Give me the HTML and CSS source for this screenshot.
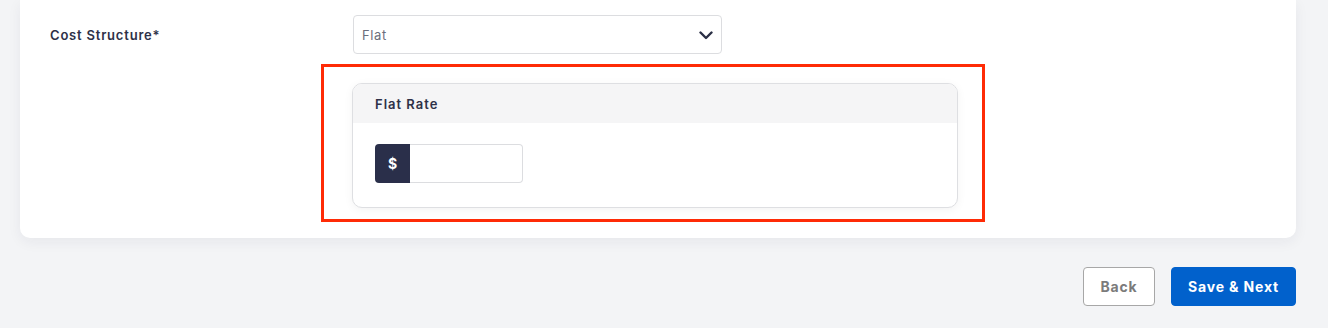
FILE: index.html
```html
<!DOCTYPE html>
<html lang="en">
<head>
<meta charset="utf-8">
<title>Cost Structure</title>
<link rel="stylesheet" href="styles.css">
</head>
<body>
<div class="page">
  <div class="card">
    <div class="row">
      <div class="label">Cost Structure*</div>
      <div class="select">
        <span class="select-value">Flat</span>
        <svg class="chevron" width="14" height="9" viewBox="0 0 14 9"><path d="M1.5 1.5 L7 7 L12.5 1.5" fill="none" stroke="#2a2f45" stroke-width="2.4" stroke-linecap="round" stroke-linejoin="round"/></svg>
      </div>
    </div>
    <div class="row sub">
      <div class="spacer"></div>
      <div class="highlight">
        <div class="rate-card">
          <div class="rate-head">Flat Rate</div>
          <div class="rate-body">
            <div class="input-group">
              <span class="prefix">$</span>
              <span class="input"></span>
            </div>
          </div>
        </div>
        <div class="red-box"></div>
      </div>
    </div>
  </div>
  <div class="actions">
    <button class="btn back">Back</button>
    <button class="btn primary">Save &amp; Next</button>
  </div>
</div>
</body>
</html>
```

FILE: styles.css
```css
* { box-sizing: border-box; }
html, body { margin: 0; padding: 0; }
body {
  background: #f3f4f6;
  font-family: Inter, "Noto Sans", "Liberation Sans", sans-serif;
  color: #2e3148;
  width: 1328px;
  height: 328px;
  overflow: hidden;
}
.page {
  padding: 0 32px 0 20px;
}
.card {
  background: #fff;
  border-radius: 0 0 10px 10px;
  box-shadow: 0 4px 14px rgba(30, 40, 70, 0.06);
  padding: 15px 30px 30px 30px;
}
.row {
  display: flex;
  align-items: center;
}
.label {
  width: 303px;
  font-size: 13px;
  font-weight: 600;
  letter-spacing: 0.8px;
  color: #2e3148;
}
.select {
  width: 369px;
  height: 39px;
  border: 1px solid #dcdde0;
  border-radius: 4px;
  display: flex;
  align-items: center;
  justify-content: space-between;
  padding: 0 8px 0 8px;
}
.select-value {
  font-size: 13px;
  color: #6b6e7c;
  letter-spacing: 0.6px;
}
.chevron { display: block; margin-top: 1px; }
.sub {
  margin-top: 29px;
  align-items: flex-start;
}
.spacer { width: 302px; flex: none; }
.highlight {
  position: relative;
}
.rate-card {
  width: 606px;
  height: 125px;
  border: 1px solid #dedfe2;
  border-radius: 10px;
  overflow: hidden;
  background: #fff;
  box-shadow: 0 2px 10px rgba(0, 0, 0, 0.05);
}
.rate-head {
  height: 39px;
  background: #f5f5f6;
  display: flex;
  align-items: center;
  padding-left: 22px;
  font-size: 13px;
  font-weight: 600;
  letter-spacing: 1px;
  color: #2e3148;
}
.rate-body {
  padding: 21px 22px;
}
.input-group {
  display: flex;
  width: 148px;
  height: 39px;
}
.prefix {
  width: 35px;
  background: #2a2f4a;
  color: #fff;
  font-weight: 700;
  font-size: 14px;
  border-radius: 4px 0 0 4px;
  display: flex;
  align-items: center;
  justify-content: center;
}
.input {
  flex: 1;
  border: 1px solid #dcdde0;
  border-left: none;
  border-radius: 0 4px 4px 0;
}
.red-box {
  position: absolute;
  left: -31px;
  top: -19px;
  width: 664px;
  height: 158px;
  border: 3px solid #ff2b06;
  pointer-events: none;
}
.actions {
  display: flex;
  justify-content: flex-end;
  gap: 16px;
  margin-top: 29px;
}
.btn {
  height: 39px;
  border-radius: 4px;
  font-family: inherit;
  font-size: 14px;
  font-weight: 700;
  letter-spacing: 0.85px;
  cursor: pointer;
  padding: 0;
}
.back {
  width: 72px;
  background: #fff;
  border: 1px solid #a7a7a7;
  color: #7b7b7b;
}
.primary {
  width: 125px;
  background: #0161cc;
  border: 1px solid #0161cc;
  color: #fff;
}
```
